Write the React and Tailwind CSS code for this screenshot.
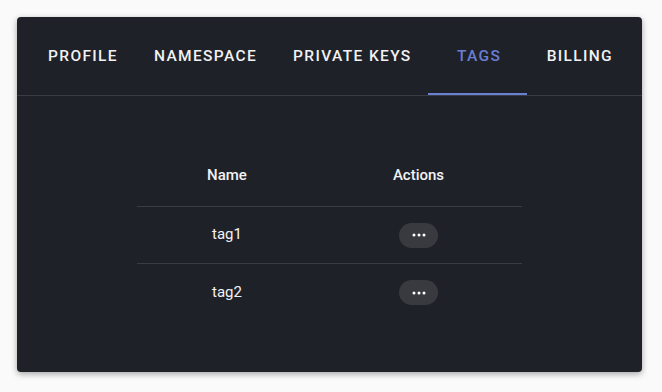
import React from 'react';

const tabs = ['Profile', 'Namespace', 'Private Keys', 'Tags', 'Billing'];
const tags = ['tag1', 'tag2'];

const DotsButton = () => (
  <button className="inline-flex items-center justify-center w-[39px] h-[25px] rounded-full bg-[#383a3f]">
    <svg width="14" height="4" viewBox="0 0 14 4">
      <circle cx="2" cy="2" r="1.5" fill="#fff" />
      <circle cx="7" cy="2" r="1.5" fill="#fff" />
      <circle cx="12" cy="2" r="1.5" fill="#fff" />
    </svg>
  </button>
);

const App = () => {
  return (
    <div className="w-[662px] h-[392px] bg-[#fafafa] pt-[17px] pl-[17px]" style={{ fontFamily: 'Roboto, sans-serif' }}>
      <div className="w-[625px] h-[355px] bg-[#1f2128] rounded-[4px] shadow-[0_2px_6px_rgba(0,0,0,0.35)] flex flex-col">
        {/* tabs */}
        <div className="flex pl-[13px] h-[79px] border-b border-[#3a3c42]">
          {tabs.map((t) => {
            const active = t === 'Tags';
            return (
              <div
                key={t}
                className={`relative flex items-center justify-center pt-[2px] px-[18px] min-w-[99px] text-[15.5px] font-medium uppercase tracking-[0.088em] ${
                  active ? 'text-[#6a7ed4]' : 'text-[#f2f2f4]'
                }`}
              >
                {t}
                {active && <span className="absolute left-[-2px] right-[2px] bottom-0 h-[2px] bg-[#6a7ed4]" />}
              </div>
            );
          })}
        </div>

        {/* table */}
        <div className="flex-1 flex justify-center pt-[48px]">
          <table className="w-[385px] h-fit text-[15px] text-[#f2f2f4] border-collapse">
            <thead>
              <tr className="border-b border-[#3a3c42]">
                <th className="w-[180px] h-[62px] font-medium text-center">Name</th>
                <th className="h-[62px] pr-[2px] font-medium text-center">Actions</th>
              </tr>
            </thead>
            <tbody>
              {tags.map((tag, i) => (
                <tr key={tag} className={i < tags.length - 1 ? 'border-b border-[#3a3c42]' : ''}>
                  <td className="h-[57px] text-center">{tag}</td>
                  <td className="h-[57px] pr-[2px] text-center">
                    <DotsButton />
                  </td>
                </tr>
              ))}
            </tbody>
          </table>
        </div>
      </div>
    </div>
  );
};

export default App;
